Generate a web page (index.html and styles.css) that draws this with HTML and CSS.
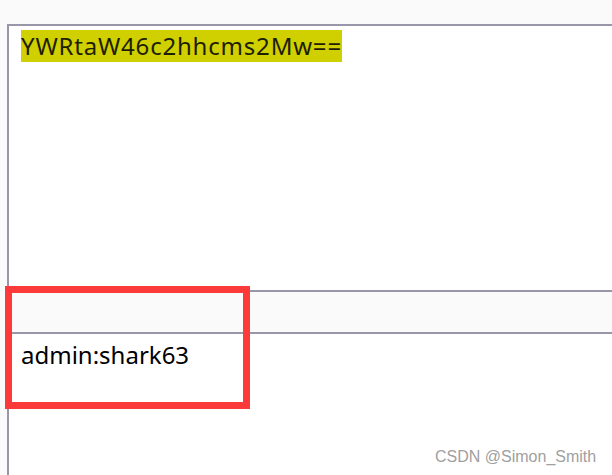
FILE: index.html
```html
<!DOCTYPE html>
<html>
<head>
<meta charset="utf-8">
<link rel="stylesheet" href="styles.css">
</head>
<body>
<div class="frame">
  <div class="pane-top">
    <span class="hl">YWRtaW46c2hhcms2Mw==</span>
  </div>
  <div class="band"></div>
  <div class="pane-bottom">
    <div class="result">admin:shark63</div>
  </div>
</div>
<div class="redbox"></div>
<div class="mark">CSDN @Simon_Smith</div>
</body>
</html>
```
FILE: styles.css
```css
html, body {
  margin: 0;
  padding: 0;
  background: #fafafa;
  width: 612px;
  height: 475px;
  overflow: hidden;
  position: relative;
  font-family: "Noto Sans", "Open Sans", sans-serif;
}
.frame {
  margin: 24px 0 0 7px;
  border-top: 2px solid #9896a8;
  border-left: 2px solid #9896a8;
  height: 449px;
  display: flex;
  flex-direction: column;
}
.pane-top {
  background: #ffffff;
  height: 264px;
  padding: 4px 0 0 12px;
  box-sizing: border-box;
}
.hl {
  display: inline-block;
  background: #d0d000;
  color: #1e1e00;
  font-size: 24px;
  letter-spacing: 0.8px;
  line-height: 32px;
  height: 32px;
  padding: 0;
}
.band {
  height: 40px;
  background: #fafafa;
  border-top: 2px solid #9896a8;
  border-bottom: 2px solid #9896a8;
}
.pane-bottom {
  flex: 1;
  background: #ffffff;
  padding: 5px 0 0 12px;
}
.result {
  font-size: 24px;
  line-height: 32px;
  color: #000;
}
.redbox {
  position: absolute;
  left: 5px;
  top: 286px;
  width: 231px;
  height: 109px;
  border: 7px solid #fc3a3a;
}
.mark {
  position: absolute;
  left: 435px;
  top: 447px;
  font-family: "Liberation Sans", Arial, sans-serif;
  font-size: 16px;
  color: #a0a0a0;
  line-height: 20px;
}
```
